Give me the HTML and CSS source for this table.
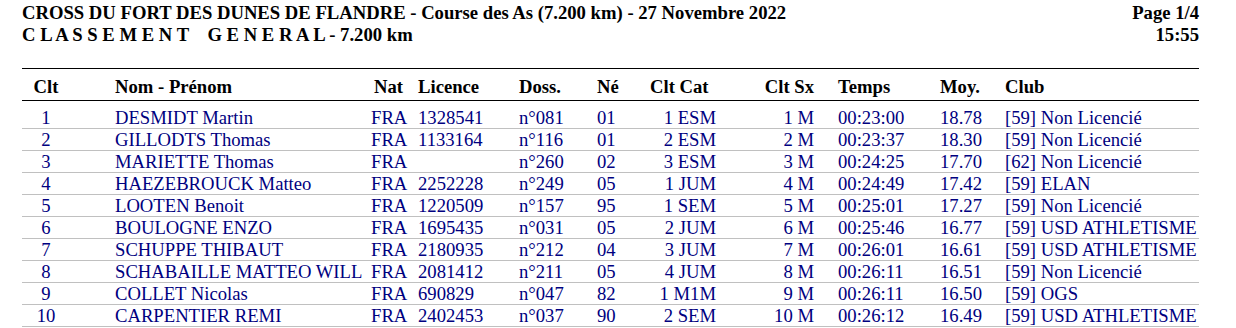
FILE: index.html
```html
<!DOCTYPE html>
<html lang="fr">
<head>
<meta charset="utf-8">
<title>Classement</title>
<link rel="stylesheet" href="styles.css">
</head>
<body>
<div class="page">
  <div class="top">
    <div class="titles">
      <div class="t1">CROSS DU FORT DES DUNES DE FLANDRE - Course des As (7.200 km) - 27 Novembre 2022</div>
      <div class="t2">C L A S S E M E N T    G E N E R A L - 7.200 km</div>
    </div>
    <div class="meta">
      <div>Page 1/4</div>
      <div>15:55</div>
    </div>
  </div>
  <div class="table">
    <div class="row head">
      <div class="c clt">Clt</div>
      <div class="c nom">Nom - Prénom</div>
      <div class="c nat nath">Nat</div>
      <div class="c lic">Licence</div>
      <div class="c doss">Doss.</div>
      <div class="c ne">Né</div>
      <div class="c cat cath">Clt Cat</div>
      <div class="c sx">Clt Sx</div>
      <div class="c temps">Temps</div>
      <div class="c moy">Moy.</div>
      <div class="c club">Club</div>
    </div>
    <div class="body">
      <div class="row"><div class="c clt">1</div><div class="c nom">DESMIDT Martin</div><div class="c nat">FRA</div><div class="c lic">1328541</div><div class="c doss">n°081</div><div class="c ne">01</div><div class="c cat">1 ESM</div><div class="c sx">1 M</div><div class="c temps">00:23:00</div><div class="c moy">18.78</div><div class="c club">[59] Non Licencié</div></div>
      <div class="row"><div class="c clt">2</div><div class="c nom">GILLODTS Thomas</div><div class="c nat">FRA</div><div class="c lic">1133164</div><div class="c doss">n°116</div><div class="c ne">01</div><div class="c cat">2 ESM</div><div class="c sx">2 M</div><div class="c temps">00:23:37</div><div class="c moy">18.30</div><div class="c club">[59] Non Licencié</div></div>
      <div class="row"><div class="c clt">3</div><div class="c nom">MARIETTE Thomas</div><div class="c nat">FRA</div><div class="c lic"></div><div class="c doss">n°260</div><div class="c ne">02</div><div class="c cat">3 ESM</div><div class="c sx">3 M</div><div class="c temps">00:24:25</div><div class="c moy">17.70</div><div class="c club">[62] Non Licencié</div></div>
      <div class="row"><div class="c clt">4</div><div class="c nom">HAEZEBROUCK Matteo</div><div class="c nat">FRA</div><div class="c lic">2252228</div><div class="c doss">n°249</div><div class="c ne">05</div><div class="c cat">1 JUM</div><div class="c sx">4 M</div><div class="c temps">00:24:49</div><div class="c moy">17.42</div><div class="c club">[59] ELAN</div></div>
      <div class="row"><div class="c clt">5</div><div class="c nom">LOOTEN Benoit</div><div class="c nat">FRA</div><div class="c lic">1220509</div><div class="c doss">n°157</div><div class="c ne">95</div><div class="c cat">1 SEM</div><div class="c sx">5 M</div><div class="c temps">00:25:01</div><div class="c moy">17.27</div><div class="c club">[59] Non Licencié</div></div>
      <div class="row"><div class="c clt">6</div><div class="c nom">BOULOGNE ENZO</div><div class="c nat">FRA</div><div class="c lic">1695435</div><div class="c doss">n°031</div><div class="c ne">05</div><div class="c cat">2 JUM</div><div class="c sx">6 M</div><div class="c temps">00:25:46</div><div class="c moy">16.77</div><div class="c club">[59] USD ATHLETISME</div></div>
      <div class="row"><div class="c clt">7</div><div class="c nom">SCHUPPE THIBAUT</div><div class="c nat">FRA</div><div class="c lic">2180935</div><div class="c doss">n°212</div><div class="c ne">04</div><div class="c cat">3 JUM</div><div class="c sx">7 M</div><div class="c temps">00:26:01</div><div class="c moy">16.61</div><div class="c club">[59] USD ATHLETISME</div></div>
      <div class="row"><div class="c clt">8</div><div class="c nom">SCHABAILLE MATTEO WILL</div><div class="c nat">FRA</div><div class="c lic">2081412</div><div class="c doss">n°211</div><div class="c ne">05</div><div class="c cat">4 JUM</div><div class="c sx">8 M</div><div class="c temps">00:26:11</div><div class="c moy">16.51</div><div class="c club">[59] Non Licencié</div></div>
      <div class="row"><div class="c clt">9</div><div class="c nom">COLLET Nicolas</div><div class="c nat">FRA</div><div class="c lic">690829</div><div class="c doss">n°047</div><div class="c ne">82</div><div class="c cat">1 M1M</div><div class="c sx">9 M</div><div class="c temps">00:26:11</div><div class="c moy">16.50</div><div class="c club">[59] OGS</div></div>
      <div class="row"><div class="c clt">10</div><div class="c nom">CARPENTIER REMI</div><div class="c nat">FRA</div><div class="c lic">2402453</div><div class="c doss">n°037</div><div class="c ne">90</div><div class="c cat">2 SEM</div><div class="c sx">10 M</div><div class="c temps">00:26:12</div><div class="c moy">16.49</div><div class="c club">[59] USD ATHLETISME</div></div>
    </div>
  </div>
</div>
</body>
</html>
```
FILE: styles.css
```css
html, body {
  margin: 0;
  padding: 0;
  background: #fff;
}
body {
  font-family: "Liberation Serif", "Times New Roman", serif;
  font-size: 18.67px;
  color: #000;
}
.page {
  width: 1177px;
  margin-left: 22px;
  padding-top: 2px;
}
.top {
  display: flex;
  justify-content: space-between;
  font-weight: bold;
  line-height: 22px;
}
.t2 {
  white-space: pre;
}
.meta {
  text-align: right;
}
.table {
  margin-top: 22px;
  border-top: 1px solid #000;
}
.row {
  display: flex;
  line-height: 21px;
  white-space: nowrap;
}
.head {
  font-weight: bold;
  padding-top: 7px;
  padding-bottom: 3px;
  border-bottom: 1px solid #000;
}
.body {
  margin-top: 6px;
  color: #000080;
}
.body .row {
  border-bottom: 1px solid #c0c0c0;
}
.c {
  flex: none;
}
.clt { width: 48px; text-align: center; }
.nom { width: 256px; padding-left: 45px; }
.nat { width: 47px; }
.nath { padding-left: 3px; width: 44px; }
.lic { width: 101px; }
.doss { width: 78px; }
.ne { width: 53px; }
.cat { width: 66px; text-align: right; }
.cath { text-align: left; }
.sx { width: 98px; text-align: right; }
.temps { width: 102px; padding-left: 24px; }
.moy { width: 65px; }
.club { width: 194px; }
```
